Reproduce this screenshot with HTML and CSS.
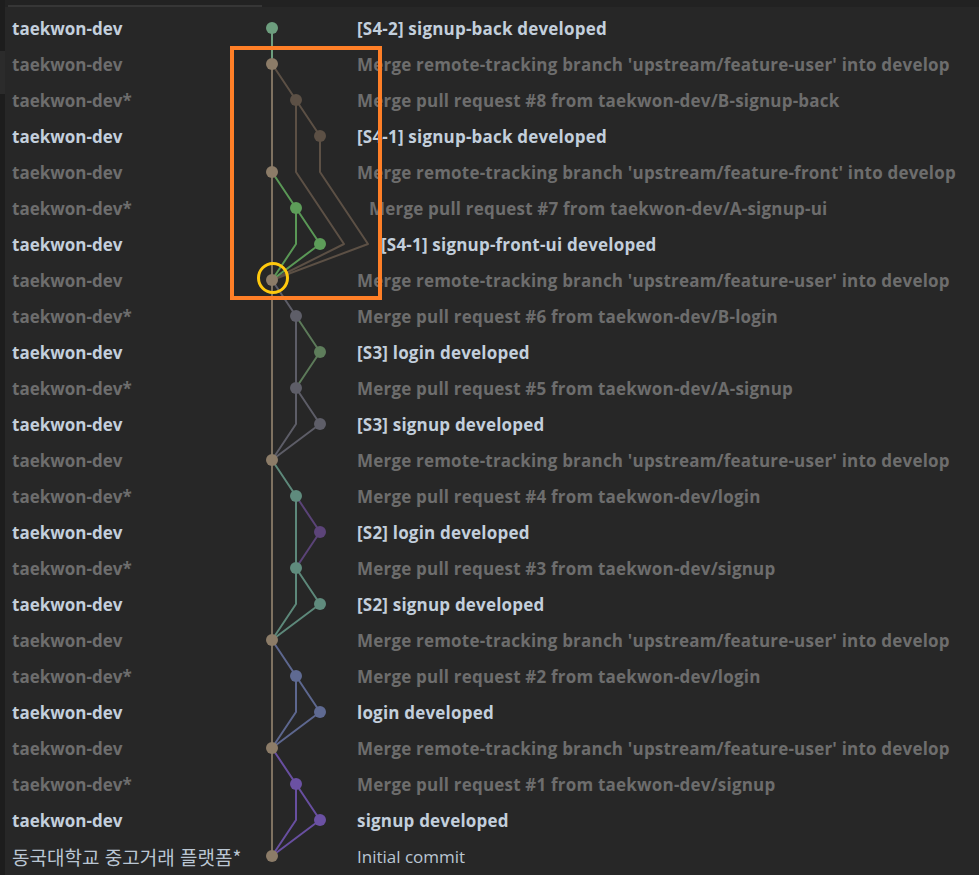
FILE: index.html
```html
<!DOCTYPE html>
<html lang="ko">
<head>
<meta charset="utf-8">
<title>Git Graph</title>
<link rel="stylesheet" href="styles.css">
</head>
<body>
<div class="page">
  <div class="gutter"><div class="thumb"></div></div>
  <div class="main">
    <div class="topbar"><div class="topline"></div></div>
    <div class="rows">
      <div class="row hi"><span class="author">taekwon-dev</span><span class="msg">[S4-2] signup-back developed</span></div>
      <div class="row lo"><span class="author">taekwon-dev</span><span class="msg">Merge remote-tracking branch 'upstream/feature-user' into develop</span></div>
      <div class="row lo"><span class="author">taekwon-dev*</span><span class="msg">Merge pull request #8 from taekwon-dev/B-signup-back</span></div>
      <div class="row hi"><span class="author">taekwon-dev</span><span class="msg">[S4-1] signup-back developed</span></div>
      <div class="row lo"><span class="author">taekwon-dev</span><span class="msg">Merge remote-tracking branch 'upstream/feature-front' into develop</span></div>
      <div class="row lo"><span class="author">taekwon-dev*</span><span class="msg shift1">Merge pull request #7 from taekwon-dev/A-signup-ui</span></div>
      <div class="row hi"><span class="author">taekwon-dev</span><span class="msg shift2">[S4-1] signup-front-ui developed</span></div>
      <div class="row lo"><span class="author">taekwon-dev</span><span class="msg">Merge remote-tracking branch 'upstream/feature-user' into develop</span></div>
      <div class="row lo"><span class="author">taekwon-dev*</span><span class="msg">Merge pull request #6 from taekwon-dev/B-login</span></div>
      <div class="row hi"><span class="author">taekwon-dev</span><span class="msg">[S3] login developed</span></div>
      <div class="row lo"><span class="author">taekwon-dev*</span><span class="msg">Merge pull request #5 from taekwon-dev/A-signup</span></div>
      <div class="row hi"><span class="author">taekwon-dev</span><span class="msg">[S3] signup developed</span></div>
      <div class="row lo"><span class="author">taekwon-dev</span><span class="msg">Merge remote-tracking branch 'upstream/feature-user' into develop</span></div>
      <div class="row lo"><span class="author">taekwon-dev*</span><span class="msg">Merge pull request #4 from taekwon-dev/login</span></div>
      <div class="row hi"><span class="author">taekwon-dev</span><span class="msg">[S2] login developed</span></div>
      <div class="row lo"><span class="author">taekwon-dev*</span><span class="msg">Merge pull request #3 from taekwon-dev/signup</span></div>
      <div class="row hi"><span class="author">taekwon-dev</span><span class="msg">[S2] signup developed</span></div>
      <div class="row lo"><span class="author">taekwon-dev</span><span class="msg">Merge remote-tracking branch 'upstream/feature-user' into develop</span></div>
      <div class="row lo"><span class="author">taekwon-dev*</span><span class="msg">Merge pull request #2 from taekwon-dev/login</span></div>
      <div class="row hi"><span class="author">taekwon-dev</span><span class="msg">login developed</span></div>
      <div class="row lo"><span class="author">taekwon-dev</span><span class="msg">Merge remote-tracking branch 'upstream/feature-user' into develop</span></div>
      <div class="row lo"><span class="author">taekwon-dev*</span><span class="msg">Merge pull request #1 from taekwon-dev/signup</span></div>
      <div class="row hi"><span class="author">taekwon-dev</span><span class="msg">signup developed</span></div>
      <div class="row init"><span class="author">동국대학교 중고거래 플랫폼*</span><span class="msg">Initial commit</span></div>
    </div>
    <div class="bottombar"></div>
  </div>

  <svg class="graph" width="979" height="875" viewBox="0 0 979 875" xmlns="http://www.w3.org/2000/svg">
    <g fill="none" stroke-width="2" stroke-linejoin="round">
      <path d="M272 28 L272 64" stroke="#6d9e7e"/>
      <path d="M272 64 L272 856" stroke="#7f7261"/>
      <path d="M272 64 L296 100 L296 172 L344 244 L272 280" stroke="#5c5045"/>
      <path d="M296 100 L320 136 L320 172 L368 244 L272 280" stroke="#5c5045"/>
      <path d="M272 172 L296 208 L296 244 L272 280" stroke="#5a9856"/>
      <path d="M296 208 L320 244 L272 280" stroke="#5a9856"/>
      <path d="M272 280 L296 316 L296 424 L272 460" stroke="#5d5d67"/>
      <path d="M296 388 L320 424 L272 460" stroke="#5d5d67"/>
      <path d="M296 316 L320 352 L296 388" stroke="#5c7a59"/>
      <path d="M272 460 L296 496 L296 604 L272 640" stroke="#5d887a"/>
      <path d="M296 568 L320 604 L272 640" stroke="#5d887a"/>
      <path d="M296 496 L320 532 L296 568" stroke="#5a4377"/>
      <path d="M272 640 L296 676 L296 712 L272 748" stroke="#5d678f"/>
      <path d="M296 676 L320 712 L272 748" stroke="#5d678f"/>
      <path d="M272 748 L296 784 L296 820 L272 856" stroke="#684fa0"/>
      <path d="M296 784 L320 820 L272 856" stroke="#684fa0"/>
    </g>
    <g>
      <circle cx="272" cy="28" r="6" fill="#6d9e7e"/>
      <circle cx="272" cy="64" r="6" fill="#8c7c68"/>
      <circle cx="296" cy="100" r="6" fill="#5c5045"/>
      <circle cx="320" cy="136" r="6" fill="#5c5045"/>
      <circle cx="272" cy="172" r="6" fill="#8c7c68"/>
      <circle cx="296" cy="208" r="6" fill="#5d9d59"/>
      <circle cx="320" cy="244" r="6" fill="#5d9d59"/>
      <circle cx="272" cy="280" r="6" fill="#8c7c68"/>
      <circle cx="296" cy="316" r="6" fill="#5e5e68"/>
      <circle cx="320" cy="352" r="6" fill="#5e7d5b"/>
      <circle cx="296" cy="388" r="6" fill="#5e5e68"/>
      <circle cx="320" cy="424" r="6" fill="#5e5e68"/>
      <circle cx="272" cy="460" r="6" fill="#8c7c68"/>
      <circle cx="296" cy="496" r="6" fill="#5f8b7d"/>
      <circle cx="320" cy="532" r="6" fill="#5c4479"/>
      <circle cx="296" cy="568" r="6" fill="#5f8b7d"/>
      <circle cx="320" cy="604" r="6" fill="#5f8b7d"/>
      <circle cx="272" cy="640" r="6" fill="#8c7c68"/>
      <circle cx="296" cy="676" r="6" fill="#5f6a92"/>
      <circle cx="320" cy="712" r="6" fill="#5f6a92"/>
      <circle cx="272" cy="748" r="6" fill="#8c7c68"/>
      <circle cx="296" cy="784" r="6" fill="#6b51a3"/>
      <circle cx="320" cy="820" r="6" fill="#6b51a3"/>
      <circle cx="272" cy="856" r="6" fill="#8c7c68"/>
    </g>
    <rect x="232" y="48" width="148" height="250" fill="none" stroke="#ff7f27" stroke-width="4"/>
    <circle cx="273" cy="278" r="14.5" fill="none" stroke="#ffc90e" stroke-width="3"/>
  </svg>
</div>
</body>
</html>
```

FILE: styles.css
```css
html, body {
  margin: 0;
  padding: 0;
  background: #272727;
}

.page {
  position: relative;
  display: flex;
  width: 979px;
  height: 875px;
  overflow: hidden;
  background: #272727;
  font-family: "Open Sans", "Noto Sans", "Noto Sans CJK KR", sans-serif;
}

.gutter {
  width: 5px;
  flex: none;
  background: #1d1d1d;
  padding-top: 51px;
}

.thumb {
  height: 43px;
  background: #2b2b2b;
}

.main {
  flex: 1;
  display: flex;
  flex-direction: column;
}

.topbar {
  height: 7px;
  background: #222222;
  padding-left: 3px;
  display: flex;
  align-items: flex-end;
  margin-bottom: 3px;
}

.topline {
  width: 254px;
  height: 2px;
  background: #363636;
}

.rows {
  display: flex;
  flex-direction: column;
}

.row {
  height: 36px;
  display: grid;
  grid-template-columns: 352px 1fr;
  align-items: center;
  font-size: 17px;
  font-weight: 700;
  white-space: nowrap;
}

.author {
  padding-left: 7px;
}

.msg {
  letter-spacing: 0.2px;
}

.hi { color: #c3cfdc; }
.lo { color: #6d6d6d; }
.init {
  color: #bac6d3;
  font-weight: 400;
}
.init .msg {
  letter-spacing: 0;
}
.init .author {
  font-family: "Noto Sans CJK KR", "Open Sans", sans-serif;
  font-size: 19px;
  line-height: 1;
}

.shift1 { padding-left: 12px; }
.shift2 { padding-left: 24px; }

.bottombar {
  flex: 1;
  margin-top: 1px;
  background: #222222;
}

.graph {
  position: absolute;
  left: 0;
  top: 0;
  pointer-events: none;
}
```
